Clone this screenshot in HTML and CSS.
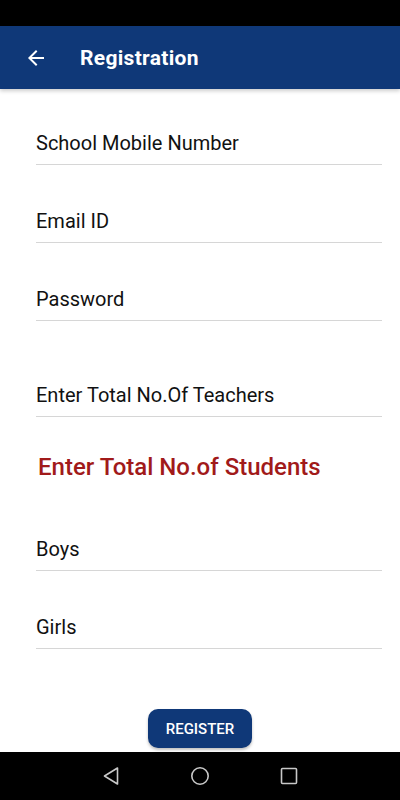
FILE: index.html
```html
<!DOCTYPE html>
<html lang="en">
<head>
  <meta charset="UTF-8">
  <meta name="viewport" content="width=device-width, initial-scale=1">
  <title>Registration</title>
  <link rel="stylesheet" href="styles.css">
</head>
<body>

<div class="screen">
  <div class="status-bar"></div>

  <header class="app-bar">
    <svg class="back" width="24" height="24" viewBox="0 0 24 24">
      <path d="M20 11H7.83l5.59-5.59L12 4l-8 8 8 8 1.41-1.41L7.83 13H20v-2z" fill="#fff"/>
    </svg>
    <h1>Registration</h1>
  </header>

  <main class="content">
    <div class="field field-first">School Mobile Number</div>
    <div class="field">Email ID</div>
    <div class="field">Password</div>
    <div class="field field-spaced">Enter Total No.Of Teachers</div>

    <h2 class="section-title">Enter Total No.of Students</h2>

    <div class="field field-after-title">Boys</div>
    <div class="field">Girls</div>

    <div class="actions">
      <button type="button">REGISTER</button>
    </div>
  </main>

  <nav class="nav-bar">
    <svg width="18" height="20" viewBox="0 0 18 20">
      <path d="M15.5 2 L2.5 10 L15.5 18 Z" fill="none" stroke="#c8c8c8" stroke-width="1.6" stroke-linejoin="round"/>
    </svg>
    <svg width="20" height="20" viewBox="0 0 20 20">
      <circle cx="10" cy="10" r="8.2" fill="none" stroke="#c8c8c8" stroke-width="1.6"/>
    </svg>
    <svg width="18" height="18" viewBox="0 0 18 18">
      <rect x="1.5" y="1.5" width="15" height="15" rx="1" fill="none" stroke="#c8c8c8" stroke-width="1.6"/>
    </svg>
  </nav>
</div>

</body>
</html>
```

FILE: styles.css
```css
body {
  margin: 0;
  padding: 0;
  background-color: #ffffff;
  font-family: Roboto, 'Noto Sans', sans-serif;
  color: #1a1a1a;
}

.screen {
  display: flex;
  flex-direction: column;
  height: 800px;
  width: 400px;
  overflow: hidden;
}

.status-bar {
  height: 26px;
  background-color: #000;
  flex-shrink: 0;
}

.app-bar {
  height: 63px;
  background-color: #0f3878;
  display: flex;
  align-items: center;
  padding-left: 24px;
  gap: 32px;
  box-shadow: 0 2px 4px rgba(0, 0, 0, 0.2);
  flex-shrink: 0;
  position: relative;
  z-index: 1;
}

.app-bar h1 {
  margin: 0;
  color: #fff;
  font-size: 21px;
  font-weight: 700;
  letter-spacing: 0.3px;
}

.content {
  flex: 1;
  display: flex;
  flex-direction: column;
  padding: 0 18px 0 36px;
}

.field {
  padding-top: 45px;
  padding-bottom: 10px;
  line-height: 22px;
  font-size: 20px;
  font-weight: 400;
  color: #111;
  border-bottom: 1px solid #d6d6d6;
}

.field-first {
  padding-top: 43px;
}

.field-spaced {
  padding-top: 63px;
}

.section-title {
  margin: 36px 0 0 2px;
  color: #a11a1a;
  font-size: 24px;
  font-weight: 500;
  line-height: 28px;
}

.field-after-title {
  padding-top: 57px;
}

.actions {
  margin-top: auto;
  display: flex;
  justify-content: center;
  padding-bottom: 4px;
  margin-left: -18px;
}

button {
  width: 104px;
  height: 39px;
  background-color: #0f3878;
  color: #fff;
  border: none;
  border-radius: 10px;
  font-family: Roboto, sans-serif;
  font-size: 15px;
  font-weight: 500;
  box-shadow: 0 2px 3px rgba(0, 0, 0, 0.25);
}

.nav-bar {
  height: 48px;
  background-color: #000;
  flex-shrink: 0;
  display: flex;
  align-items: center;
  justify-content: center;
  gap: 70px;
}
```
